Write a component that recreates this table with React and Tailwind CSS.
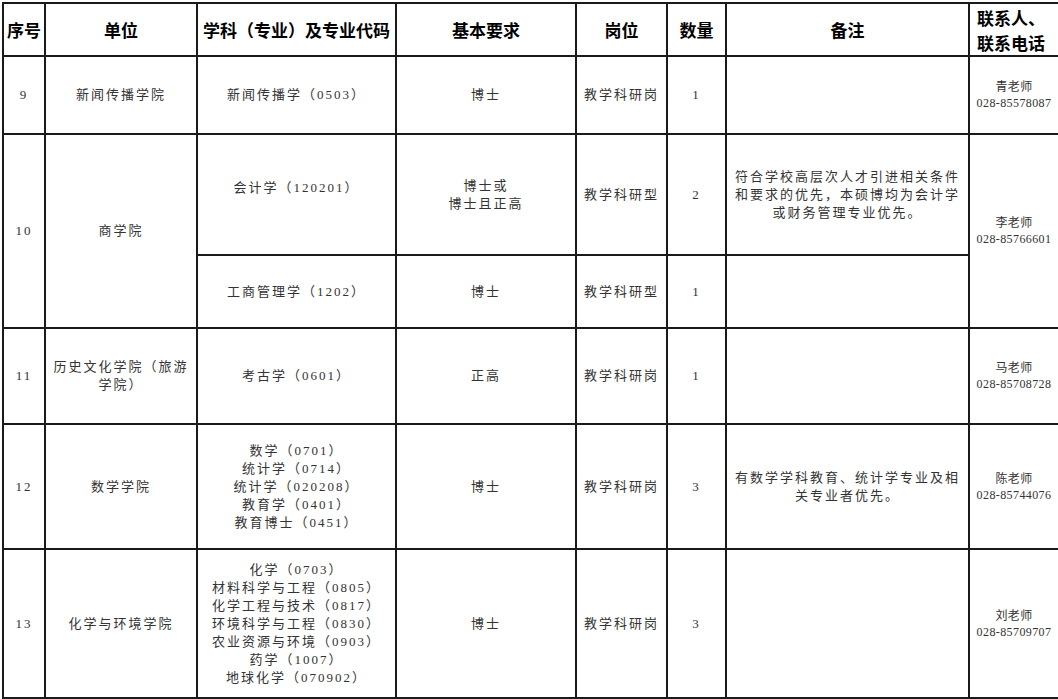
import React from "react";

const serif = { fontFamily: '"Liberation Serif", "Noto Sans CJK SC", serif' };

function H({ children, extra = "" }) {
  return (
    <th className={"border-2 border-[#1a1a1a] p-0 text-center align-middle text-[17px] font-bold leading-[22px] text-black " + extra} style={{ fontFamily: '"Noto Sans CJK SC", sans-serif' }}>
      {children}
    </th>
  );
}

function C({ children, rowSpan, extra = "" }) {
  return (
    <td rowSpan={rowSpan} className={"border-2 border-[#1a1a1a] p-0 text-center align-middle text-[13px] leading-[18px] tracking-[2px] text-[#333] " + extra}>
      {children}
    </td>
  );
}

function Contact({ name, phone, rowSpan }) {
  return (
    <td rowSpan={rowSpan} className="border-2 border-[#1a1a1a] p-0 text-center align-middle text-[12px] leading-[16px] tracking-[0.4px] text-[#333]">
      <div>{name}</div>
      <div>{phone}</div>
    </td>
  );
}

function Lines({ items }) {
  return items.map((t, i) => <div key={i}>{t}</div>);
}

export default function App() {
  return (
    <div className="w-[1058px] h-[699px] overflow-hidden bg-white pl-[2px] pt-[2px]" style={serif}>
      <table className="table-fixed border-collapse w-[1056px]">
        <colgroup>
          <col className="w-[42px]" />
          <col className="w-[152px]" />
          <col className="w-[199px]" />
          <col className="w-[180px]" />
          <col className="w-[91px]" />
          <col className="w-[59px]" />
          <col className="w-[243px]" />
          <col className="w-[90px]" />
        </colgroup>
        <thead>
          <tr className="h-[53px]">
            <H>序号</H>
            <H>单位</H>
            <H>学科（专业）及专业代码</H>
            <H>基本要求</H>
            <H>岗位</H>
            <H>数量</H>
            <H>备注</H>
            <H extra="leading-[25px]">
              <div className="text-left pl-[7px]">
                联系人、
                <br />
                联系电话
              </div>
            </H>
          </tr>
        </thead>
        <tbody>
          <tr className="h-[78px]">
            <C>9</C>
            <C>新闻传播学院</C>
            <C>新闻传播学（0503）</C>
            <C>博士</C>
            <C>教学科研岗</C>
            <C>1</C>
            <C></C>
            <Contact name="青老师" phone="028-85578087" />
          </tr>
          <tr className="h-[121px]">
            <C rowSpan={2}>10</C>
            <C rowSpan={2}>商学院</C>
            <C extra="pb-[14px]">会计学（120201）</C>
            <C>
              <Lines items={["博士或", "博士且正高"]} />
            </C>
            <C>教学科研型</C>
            <C>2</C>
            <C>
              <Lines items={["符合学校高层次人才引进相关条件", "和要求的优先，本硕博均为会计学", "或财务管理专业优先。"]} />
            </C>
            <Contact rowSpan={2} name="李老师" phone="028-85766601" />
          </tr>
          <tr className="h-[73px]">
            <C>工商管理学（1202）</C>
            <C>博士</C>
            <C>教学科研型</C>
            <C>1</C>
            <C></C>
          </tr>
          <tr className="h-[96px]">
            <C>11</C>
            <C>
              <Lines items={["历史文化学院（旅游", "学院）"]} />
            </C>
            <C>考古学（0601）</C>
            <C>正高</C>
            <C>教学科研岗</C>
            <C>1</C>
            <C></C>
            <Contact name="马老师" phone="028-85708728" />
          </tr>
          <tr className="h-[125px]">
            <C>12</C>
            <C>数学学院</C>
            <C>
              <Lines items={["数学（0701）", "统计学（0714）", "统计学（020208）", "教育学（0401）", "教育博士（0451）"]} />
            </C>
            <C>博士</C>
            <C>教学科研岗</C>
            <C>3</C>
            <C>
              <Lines items={["有数学学科教育、统计学专业及相", "关专业者优先。"]} />
            </C>
            <Contact name="陈老师" phone="028-85744076" />
          </tr>
          <tr className="h-[149px]">
            <C>13</C>
            <C>化学与环境学院</C>
            <C>
              <Lines
                items={[
                  "化学（0703）",
                  "材料科学与工程（0805）",
                  "化学工程与技术（0817）",
                  "环境科学与工程（0830）",
                  "农业资源与环境（0903）",
                  "药学（1007）",
                  "地球化学（070902）",
                ]}
              />
            </C>
            <C>博士</C>
            <C>教学科研岗</C>
            <C>3</C>
            <C></C>
            <Contact name="刘老师" phone="028-85709707" />
          </tr>
        </tbody>
      </table>
    </div>
  );
}
